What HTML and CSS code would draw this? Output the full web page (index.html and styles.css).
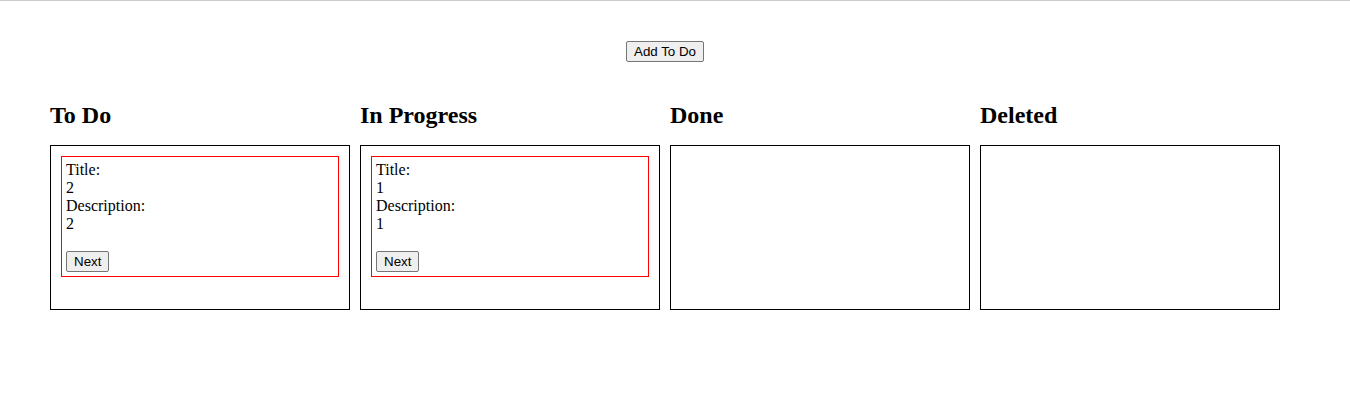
FILE: index.html
```html
<!DOCTYPE html>
<html>
<head>
<meta charset="utf-8">
<link rel="stylesheet" href="styles.css">
</head>
<body>
<div class="app">
  <div class="toolbar">
    <button class="btn">Add To Do</button>
  </div>
  <div class="board">
    <div class="column">
      <h2 class="col-title">To Do</h2>
      <div class="col-box">
        <div class="card">
          <div>Title:</div>
          <div>2</div>
          <div>Description:</div>
          <div>2</div>
          <br>
          <button class="btn">Next</button>
        </div>
      </div>
    </div>
    <div class="column">
      <h2 class="col-title">In Progress</h2>
      <div class="col-box">
        <div class="card">
          <div>Title:</div>
          <div>1</div>
          <div>Description:</div>
          <div>1</div>
          <br>
          <button class="btn">Next</button>
        </div>
      </div>
    </div>
    <div class="column">
      <h2 class="col-title">Done</h2>
      <div class="col-box"></div>
    </div>
    <div class="column">
      <h2 class="col-title">Deleted</h2>
      <div class="col-box"></div>
    </div>
  </div>
</div>
</body>
</html>
```
FILE: styles.css
```css
html, body {
  margin: 0;
  padding: 0;
  background: #fff;
}
body {
  border-top: 1px solid #cccccc;
  font-family: "Liberation Serif", "Times New Roman", serif;
  font-size: 16px;
  line-height: 18px;
  color: #000;
}
.app {
  width: 1230px;
  padding: 40px 0 0 50px;
}
.toolbar {
  display: flex;
  justify-content: center;
}
.btn {
  font-family: "Liberation Sans", Arial, sans-serif;
  font-size: 13.33px;
  line-height: 15px;
  height: 21px;
  padding: 1px 7px;
  margin: 0;
  border: 1px solid #767676;
  border-radius: 2px;
  background: #efefef;
  color: #000;
  box-sizing: border-box;
}
.board {
  display: flex;
  gap: 10px;
  margin-top: 39px;
}
.column {
  width: 300px;
  display: flex;
  flex-direction: column;
}
.col-title {
  margin: 0 0 16px 0;
  font-size: 24px;
  line-height: 28px;
  font-weight: bold;
}
.col-box {
  box-sizing: border-box;
  height: 165px;
  border: 1px solid #000;
  padding: 10px;
}
.card {
  border: 1px solid #ff0000;
  padding: 4px 4px 4px 4px;
}
```
